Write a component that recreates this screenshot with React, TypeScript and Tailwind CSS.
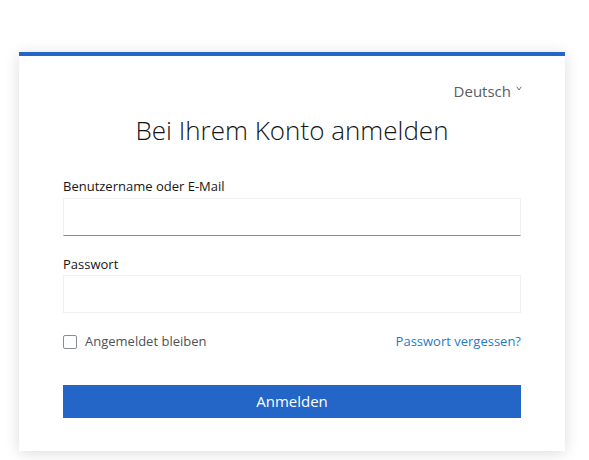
import React from 'react';

export default function App() {
  return (
    <div className="min-h-[460px] w-[589px] bg-white pt-[52px]" style={{ fontFamily: '"Open Sans", "Noto Sans", sans-serif' }}>
      <div className="ml-[19px] w-[546px] border-t-4 border-[#2366c8] bg-white px-[44px] pb-[33px] shadow-[0_2px_14px_rgba(0,0,0,0.14)]">
        {/* Language switch */}
        <div className="flex justify-end pt-[25px] pr-0">
          <div className="flex items-start gap-[5px] text-[15px] leading-[20px] text-[#5a5d61]">
            <span>Deutsch</span>
            <svg width="6" height="5" viewBox="0 0 6 5" className="mt-[5px] mr-[-1px]">
              <path d="M0.8 0.8 L3 4 L5.2 0.8" fill="none" stroke="#6a6e73" strokeWidth="1" />
            </svg>
          </div>
        </div>

        <h1 className="mt-[12px] text-center text-[26px] font-light leading-[34px] text-[#151515]">
          Bei Ihrem Konto anmelden
        </h1>

        <form className="mt-[30px]">
          <label className="block text-[13px] leading-[18px] text-[#151515]">Benutzername oder E-Mail</label>
          <input
            type="text"
            className="mt-[3px] block h-[38px] w-full border border-[#f0f0f0] border-b-[#8a8d90] bg-white outline-none"
          />

          <label className="mt-[19px] block text-[13px] leading-[18px] text-[#151515]">Passwort</label>
          <input
            type="password"
            className="mt-[2px] block h-[38px] w-full border border-[#f0f0f0] border-b-[#f0f0f0] bg-white outline-none"
          />

          <div className="mt-[19px] flex h-[20px] items-center justify-between text-[13px]">
            <label className="flex items-center gap-[8px] text-[#4f5255]">
              <span className="block h-[14px] w-[14px] rounded-[2px] border-[1.5px] border-[#8a8d90] bg-white" />
              Angemeldet bleiben
            </label>
            <a className="text-[#1f7cc4]">Passwort vergessen?</a>
          </div>

          <button
            type="button"
            className="mt-[33px] block h-[33px] w-full bg-[#2366c8] text-[15px] font-medium text-white"
          >
            Anmelden
          </button>
        </form>
      </div>
    </div>
  );
}
